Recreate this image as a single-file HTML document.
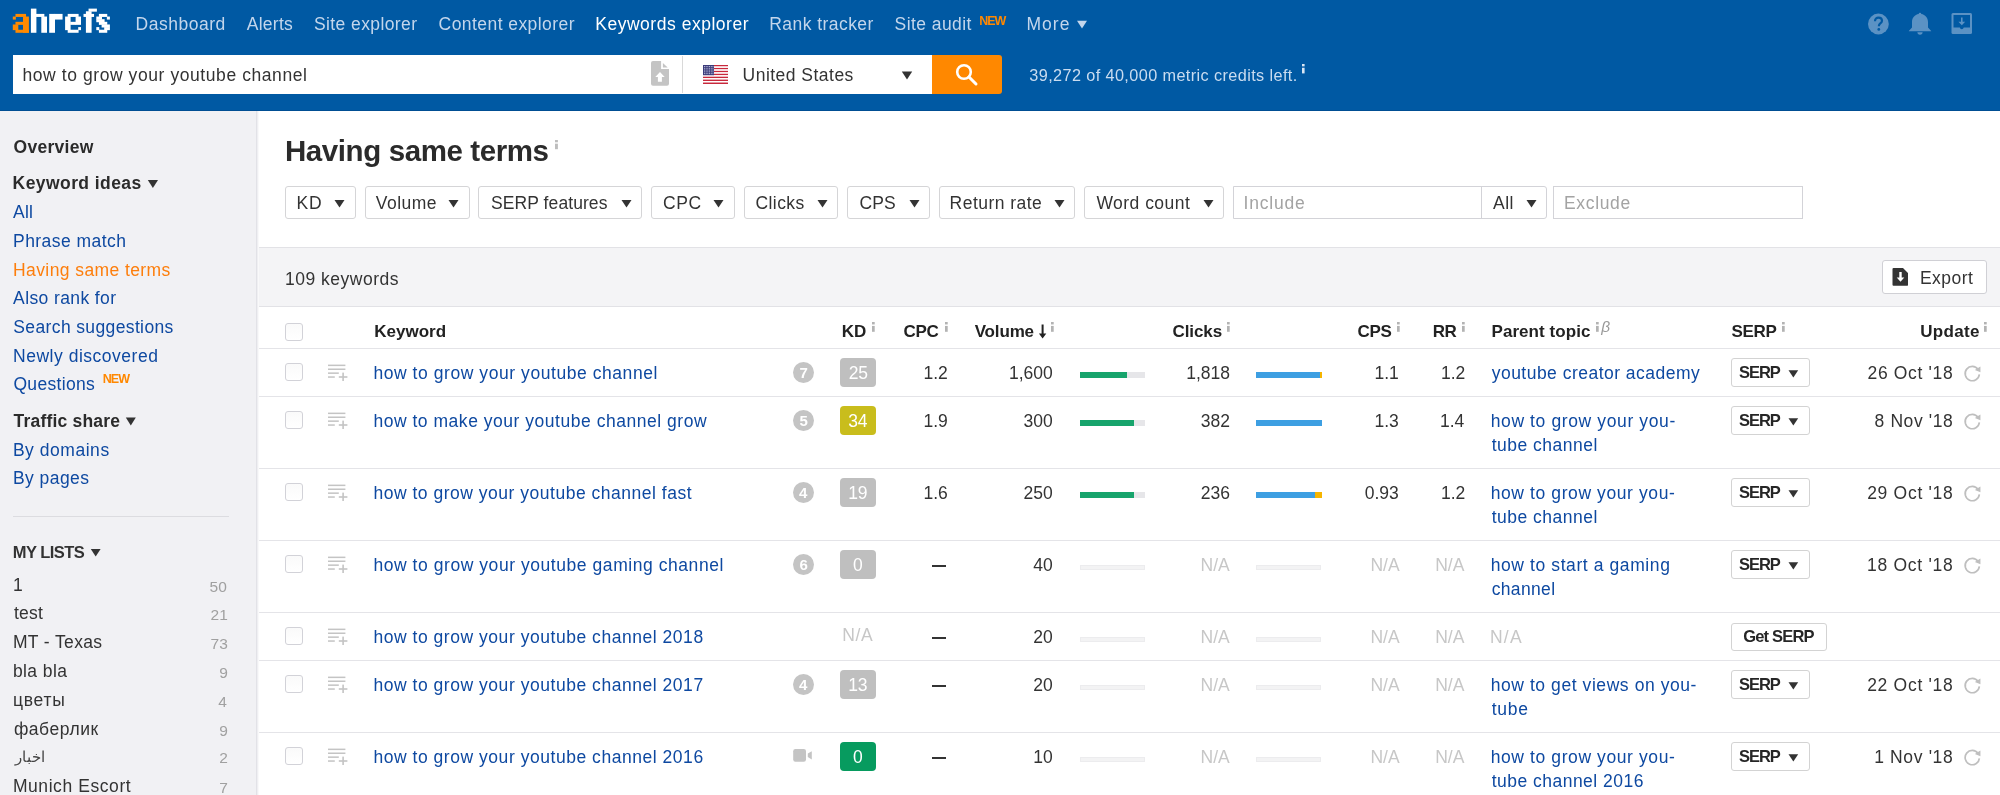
<!DOCTYPE html>
<html><head><meta charset="utf-8"><style>
html,body{margin:0;padding:0;width:2000px;height:795px;overflow:hidden;background:#fff;}
body{position:relative;font-family:"Liberation Sans", sans-serif;}
.t{position:absolute;white-space:nowrap;}
svg{display:block;}
</style></head><body>
<div id="wrap" style="position:absolute;left:0;top:0;width:2000px;height:795px;will-change:transform;">
<div style="position:absolute;left:0;top:0;width:2000px;height:110px;background:#0059a3"></div>
<div style="position:absolute;left:0;top:110px;width:2000px;height:1px;background:#004e93"></div>
<svg style="position:absolute;left:1076px;top:20px" width="12" height="10"><path d="M1 0.8 H11 L6 8.6 Z" fill="#c3d6ec"/></svg>
<div style="position:absolute;left:13px;top:55px;width:919px;height:39px;background:#fff"></div>
<svg style="position:absolute;left:640px;top:55px" width="40" height="40" viewBox="640 55 40 40"><path d="M653 61 H661.1 V69.1 H669 V83.7 A2 2 0 0 1 667 85.7 H653 A2 2 0 0 1 651 83.7 V63 A2 2 0 0 1 653 61 Z" fill="#c4c4c4"/><path d="M662.9 63 V67.6 H667.7 Z" fill="#c4c4c4"/><path d="M660 72.1 L664.7 77.1 H661.9 V81.7 H657.9 V77.1 H655.3 Z" fill="#fff"/></svg>
<div style="position:absolute;left:682px;top:56px;width:1px;height:37px;background:#d9d9d9"></div>
<svg style="position:absolute;left:703px;top:65px" width="25" height="19" viewBox="0 0 25 19"><rect x="0" y="0.000" width="25" height="1.512" fill="#c8283c"/><rect x="0" y="1.462" width="25" height="1.512" fill="#ffffff"/><rect x="0" y="2.923" width="25" height="1.512" fill="#c8283c"/><rect x="0" y="4.385" width="25" height="1.512" fill="#ffffff"/><rect x="0" y="5.846" width="25" height="1.512" fill="#c8283c"/><rect x="0" y="7.308" width="25" height="1.512" fill="#ffffff"/><rect x="0" y="8.769" width="25" height="1.512" fill="#c8283c"/><rect x="0" y="10.231" width="25" height="1.512" fill="#ffffff"/><rect x="0" y="11.692" width="25" height="1.512" fill="#c8283c"/><rect x="0" y="13.154" width="25" height="1.512" fill="#ffffff"/><rect x="0" y="14.615" width="25" height="1.512" fill="#c8283c"/><rect x="0" y="16.077" width="25" height="1.512" fill="#ffffff"/><rect x="0" y="17.538" width="25" height="1.512" fill="#c8283c"/><rect x="0" y="0" width="11" height="10.2" fill="#3b3b7a"/><rect x="1.00" y="1.00" width="0.9" height="0.9" fill="#cfd3ea"/><rect x="2.70" y="1.00" width="0.9" height="0.9" fill="#cfd3ea"/><rect x="4.40" y="1.00" width="0.9" height="0.9" fill="#cfd3ea"/><rect x="6.10" y="1.00" width="0.9" height="0.9" fill="#cfd3ea"/><rect x="7.80" y="1.00" width="0.9" height="0.9" fill="#cfd3ea"/><rect x="9.50" y="1.00" width="0.9" height="0.9" fill="#cfd3ea"/><rect x="1.00" y="2.80" width="0.9" height="0.9" fill="#cfd3ea"/><rect x="2.70" y="2.80" width="0.9" height="0.9" fill="#cfd3ea"/><rect x="4.40" y="2.80" width="0.9" height="0.9" fill="#cfd3ea"/><rect x="6.10" y="2.80" width="0.9" height="0.9" fill="#cfd3ea"/><rect x="7.80" y="2.80" width="0.9" height="0.9" fill="#cfd3ea"/><rect x="9.50" y="2.80" width="0.9" height="0.9" fill="#cfd3ea"/><rect x="1.00" y="4.60" width="0.9" height="0.9" fill="#cfd3ea"/><rect x="2.70" y="4.60" width="0.9" height="0.9" fill="#cfd3ea"/><rect x="4.40" y="4.60" width="0.9" height="0.9" fill="#cfd3ea"/><rect x="6.10" y="4.60" width="0.9" height="0.9" fill="#cfd3ea"/><rect x="7.80" y="4.60" width="0.9" height="0.9" fill="#cfd3ea"/><rect x="9.50" y="4.60" width="0.9" height="0.9" fill="#cfd3ea"/><rect x="1.00" y="6.40" width="0.9" height="0.9" fill="#cfd3ea"/><rect x="2.70" y="6.40" width="0.9" height="0.9" fill="#cfd3ea"/><rect x="4.40" y="6.40" width="0.9" height="0.9" fill="#cfd3ea"/><rect x="6.10" y="6.40" width="0.9" height="0.9" fill="#cfd3ea"/><rect x="7.80" y="6.40" width="0.9" height="0.9" fill="#cfd3ea"/><rect x="9.50" y="6.40" width="0.9" height="0.9" fill="#cfd3ea"/><rect x="1.00" y="8.20" width="0.9" height="0.9" fill="#cfd3ea"/><rect x="2.70" y="8.20" width="0.9" height="0.9" fill="#cfd3ea"/><rect x="4.40" y="8.20" width="0.9" height="0.9" fill="#cfd3ea"/><rect x="6.10" y="8.20" width="0.9" height="0.9" fill="#cfd3ea"/><rect x="7.80" y="8.20" width="0.9" height="0.9" fill="#cfd3ea"/><rect x="9.50" y="8.20" width="0.9" height="0.9" fill="#cfd3ea"/></svg>
<svg style="position:absolute;left:901px;top:71px" width="12" height="9"><path d="M0.8 0.5 H11.2 L6 8.5 Z" fill="#333"/></svg>
<div style="position:absolute;left:932px;top:55px;width:70px;height:39px;background:#ff8800;border-radius:0 3px 3px 0"></div>
<svg style="position:absolute;left:954px;top:62px" width="26" height="26" viewBox="0 0 26 26"><circle cx="10" cy="10" r="6.8" fill="none" stroke="#fff" stroke-width="2.6"/><path d="M15 15 L22 22" stroke="#fff" stroke-width="3" stroke-linecap="round"/></svg>
<svg style="position:absolute;left:1301.80px;top:64.30px" width="3.10" height="9.90"><rect x="0" y="0" width="2.6" height="2.35" fill="#d9e6f4"/><rect x="0" y="3.76" width="2.6" height="5.64" fill="#d9e6f4"/></svg>
<svg style="position:absolute;left:1866px;top:12px" width="24" height="24" viewBox="0 0 24 24"><circle cx="12.4" cy="12" r="10.4" fill="#5b92c4"/><path d="M9 9.3 C9 6.8 10.6 5.6 12.5 5.6 C14.6 5.6 16 6.9 16 8.8 C16 10.6 14.6 11.3 13.6 12.1 C13 12.6 12.9 13.2 12.9 14.3" fill="none" stroke="#0059a3" stroke-width="2.2"/><circle cx="12.8" cy="17.4" r="1.4" fill="#0059a3"/></svg>
<svg style="position:absolute;left:1908px;top:12px" width="24" height="24" viewBox="0 0 24 24"><path d="M12 0.8 A1.3 1.3 0 0 1 13.3 2.1 C17.2 2.8 20 5.8 20 10 V15.6 L23.2 18.9 V19.3 H0.8 V18.9 L4 15.6 V10 C4 5.8 6.8 2.8 10.7 2.1 A1.3 1.3 0 0 1 12 0.8 Z" fill="#5b92c4"/><path d="M9.4 20.3 H14.6 A2.6 2.4 0 0 1 9.4 20.3 Z" fill="#5b92c4"/></svg>
<svg style="position:absolute;left:1950px;top:12px" width="24" height="24" viewBox="0 0 24 24"><rect x="1.5" y="1" width="20.5" height="21" rx="1.5" fill="#5b92c4"/><path d="M3.5 3 H20 V15.6 H13.7 A2 2 0 0 1 9.8 15.6 H3.5 Z" fill="#0059a3"/><path d="M11 5.5 H12.6 V9.8 H15.2 L11.8 13.3 L8.4 9.8 H11 Z" fill="#5b92c4"/></svg>
<svg style="position:absolute;left:0;top:0" width="120" height="40" viewBox="0 0 120 40"><rect x="15.46" y="13.90" width="10.59" height="3.04" fill="#ff8a00"/><rect x="12.80" y="16.54" width="3.06" height="3.04" fill="#ff8a00"/><rect x="23.00" y="16.54" width="5.90" height="16.24" fill="#ff8a00"/><rect x="15.46" y="21.82" width="7.94" height="3.04" fill="#ff8a00"/><rect x="12.80" y="24.46" width="5.50" height="5.68" fill="#ff8a00"/><rect x="15.46" y="29.74" width="13.44" height="3.04" fill="#ff8a00"/><rect x="30.90" y="8.62" width="5.50" height="24.16" fill="#ffffff"/><rect x="36.00" y="13.90" width="8.35" height="3.04" fill="#ffffff"/><rect x="41.30" y="16.54" width="5.70" height="16.24" fill="#ffffff"/><rect x="49.20" y="13.90" width="5.80" height="18.88" fill="#ffffff"/><rect x="54.60" y="13.90" width="7.95" height="5.68" fill="#ffffff"/><rect x="67.70" y="13.90" width="10.90" height="3.04" fill="#ffffff"/><rect x="65.10" y="16.54" width="5.50" height="13.60" fill="#ffffff"/><rect x="75.60" y="16.54" width="5.40" height="8.32" fill="#ffffff"/><rect x="70.20" y="21.82" width="5.80" height="3.04" fill="#ffffff"/><rect x="67.70" y="29.74" width="10.90" height="3.04" fill="#ffffff"/><rect x="78.20" y="27.10" width="2.80" height="3.04" fill="#ffffff"/><rect x="88.55" y="8.62" width="8.35" height="3.04" fill="#ffffff"/><rect x="85.90" y="11.26" width="5.70" height="21.52" fill="#ffffff"/><rect x="83.50" y="13.90" width="10.55" height="3.04" fill="#ffffff"/><rect x="98.90" y="13.90" width="8.35" height="3.04" fill="#ffffff"/><rect x="106.85" y="16.54" width="3.05" height="3.04" fill="#ffffff"/><rect x="96.30" y="16.54" width="5.70" height="3.04" fill="#ffffff"/><rect x="96.30" y="19.18" width="8.30" height="3.04" fill="#ffffff"/><rect x="98.90" y="21.82" width="8.35" height="3.04" fill="#ffffff"/><rect x="101.60" y="24.46" width="8.30" height="3.04" fill="#ffffff"/><rect x="104.20" y="27.10" width="5.70" height="3.04" fill="#ffffff"/><rect x="96.30" y="27.10" width="3.00" height="3.04" fill="#ffffff"/><rect x="98.90" y="29.74" width="8.35" height="3.04" fill="#ffffff"/></svg>
<div style="position:absolute;left:0;top:111px;width:256px;height:684px;background:#f1f1f4"></div>
<div style="position:absolute;left:256px;top:111px;width:1px;height:684px;background:#e2e2e7"></div>
<div style="position:absolute;left:257px;top:111px;width:1px;height:684px;background:#efeff2;z-index:5"></div>
<div style="position:absolute;left:258px;top:111px;width:1px;height:684px;background:#f9f9fa;z-index:5"></div>
<svg style="position:absolute;left:147px;top:180px" width="12" height="9"><path d="M0.8 0 H11 L5.9 8 Z" fill="#333333"/></svg>
<svg style="position:absolute;left:125px;top:417px" width="12" height="9"><path d="M0.8 0.6 H10.8 L5.8 8.6 Z" fill="#333333"/></svg>
<div style="position:absolute;left:13px;top:516px;width:216px;height:1px;background:#dcdce0"></div>
<svg style="position:absolute;left:90px;top:549px" width="12" height="9"><path d="M0.8 0 H10.6 L5.7 7.6 Z" fill="#333333"/></svg>
<div style="position:absolute;left:257px;top:111px;width:1743px;height:136px;background:#fff"></div>
<svg style="position:absolute;left:555.20px;top:140.30px" width="3.40" height="9.70"><rect x="0" y="0" width="2.9" height="2.30" fill="#bdbdbd"/><rect x="0" y="3.68" width="2.9" height="5.52" fill="#bdbdbd"/></svg>
<div style="position:absolute;left:285px;top:186px;width:71px;height:33px;box-sizing:border-box;border:1px solid #d5d5d7;border-radius:3px;background:#fff"></div>
<svg style="position:absolute;left:334.3px;top:200px" width="12" height="9"><path d="M0.5 0 H10.5 L5.5 7.6 Z" fill="#333333"/></svg>
<div style="position:absolute;left:365px;top:186px;width:105px;height:33px;box-sizing:border-box;border:1px solid #d5d5d7;border-radius:3px;background:#fff"></div>
<svg style="position:absolute;left:447.5px;top:200px" width="12" height="9"><path d="M0.5 0 H10.5 L5.5 7.6 Z" fill="#333333"/></svg>
<div style="position:absolute;left:478px;top:186px;width:164px;height:33px;box-sizing:border-box;border:1px solid #d5d5d7;border-radius:3px;background:#fff"></div>
<svg style="position:absolute;left:620.5px;top:200px" width="12" height="9"><path d="M0.5 0 H10.5 L5.5 7.6 Z" fill="#333333"/></svg>
<div style="position:absolute;left:651px;top:186px;width:84px;height:33px;box-sizing:border-box;border:1px solid #d5d5d7;border-radius:3px;background:#fff"></div>
<svg style="position:absolute;left:713.1px;top:200px" width="12" height="9"><path d="M0.5 0 H10.5 L5.5 7.6 Z" fill="#333333"/></svg>
<div style="position:absolute;left:744px;top:186px;width:94px;height:33px;box-sizing:border-box;border:1px solid #d5d5d7;border-radius:3px;background:#fff"></div>
<svg style="position:absolute;left:816.5px;top:200px" width="12" height="9"><path d="M0.5 0 H10.5 L5.5 7.6 Z" fill="#333333"/></svg>
<div style="position:absolute;left:847px;top:186px;width:83px;height:33px;box-sizing:border-box;border:1px solid #d5d5d7;border-radius:3px;background:#fff"></div>
<svg style="position:absolute;left:908.5px;top:200px" width="12" height="9"><path d="M0.5 0 H10.5 L5.5 7.6 Z" fill="#333333"/></svg>
<div style="position:absolute;left:939px;top:186px;width:136px;height:33px;box-sizing:border-box;border:1px solid #d5d5d7;border-radius:3px;background:#fff"></div>
<svg style="position:absolute;left:1053.5px;top:200px" width="12" height="9"><path d="M0.5 0 H10.5 L5.5 7.6 Z" fill="#333333"/></svg>
<div style="position:absolute;left:1084px;top:186px;width:140px;height:33px;box-sizing:border-box;border:1px solid #d5d5d7;border-radius:3px;background:#fff"></div>
<svg style="position:absolute;left:1202.5px;top:200px" width="12" height="9"><path d="M0.5 0 H10.5 L5.5 7.6 Z" fill="#333333"/></svg>
<div style="position:absolute;left:1233px;top:186px;width:314px;height:33px;box-sizing:border-box;border:1px solid #d3d3d8;border-radius:0 3px 3px 0;background:#fff"></div>
<div style="position:absolute;left:1481px;top:186px;width:1px;height:33px;background:#d3d3d8"></div>
<svg style="position:absolute;left:1525.5px;top:200px" width="12" height="9"><path d="M0.5 0 H10.5 L5.5 7.6 Z" fill="#333333"/></svg>
<div style="position:absolute;left:1553px;top:186px;width:250px;height:33px;box-sizing:border-box;border:1px solid #d3d3d8;background:#fff"></div>
<div style="position:absolute;left:257px;top:247px;width:1743px;height:1px;background:#e2e2e6"></div>
<div style="position:absolute;left:257px;top:248px;width:1743px;height:58px;background:#f4f4f6"></div>
<div style="position:absolute;left:257px;top:306px;width:1743px;height:1px;background:#e2e2e6"></div>
<div style="position:absolute;left:1882px;top:260px;width:105px;height:34px;box-sizing:border-box;border:1px solid #d0d0d5;border-radius:3px;background:#fff"></div>
<svg style="position:absolute;left:1892px;top:267px" width="17" height="20" viewBox="0 0 17 20"><path d="M1.5 1 H11 L16 6 V17.5 A1 1 0 0 1 15 18.8 H1.5 A1 1 0 0 1 0.5 17.8 V2 A1 1 0 0 1 1.5 1 Z" fill="#333333"/><path d="M7.3 5 H9.7 V10.5 H12.3 L8.5 14.8 L4.7 10.5 H7.3 Z" fill="#fff"/></svg>
<div style="position:absolute;left:257px;top:307px;width:1743px;height:488px;background:#fff"></div>
<div style="position:absolute;left:285px;top:323px;width:18px;height:18px;box-sizing:border-box;border:1px solid #d2d2d8;border-radius:3px;background:linear-gradient(#fafafa,#fff)"></div>
<svg style="position:absolute;left:871.50px;top:321.70px" width="3.20" height="10.30"><rect x="0" y="0" width="2.7" height="2.45" fill="#b3b3b3"/><rect x="0" y="3.92" width="2.7" height="5.88" fill="#b3b3b3"/></svg>
<svg style="position:absolute;left:944.80px;top:321.70px" width="3.20" height="10.30"><rect x="0" y="0" width="2.7" height="2.45" fill="#b3b3b3"/><rect x="0" y="3.92" width="2.7" height="5.88" fill="#b3b3b3"/></svg>
<svg style="position:absolute;left:1038px;top:324px" width="9" height="15" viewBox="0 0 9 15"><path d="M3.6 0.5 H5.6 V9.5 H8.3 L4.6 14.5 L0.9 9.5 H3.6 Z" fill="#222"/></svg>
<svg style="position:absolute;left:1050.50px;top:321.70px" width="3.20" height="10.30"><rect x="0" y="0" width="2.7" height="2.45" fill="#b3b3b3"/><rect x="0" y="3.92" width="2.7" height="5.88" fill="#b3b3b3"/></svg>
<svg style="position:absolute;left:1227.20px;top:321.70px" width="3.20" height="10.30"><rect x="0" y="0" width="2.7" height="2.45" fill="#b3b3b3"/><rect x="0" y="3.92" width="2.7" height="5.88" fill="#b3b3b3"/></svg>
<svg style="position:absolute;left:1396.60px;top:321.70px" width="3.20" height="10.30"><rect x="0" y="0" width="2.7" height="2.45" fill="#b3b3b3"/><rect x="0" y="3.92" width="2.7" height="5.88" fill="#b3b3b3"/></svg>
<svg style="position:absolute;left:1462.00px;top:321.70px" width="3.20" height="10.30"><rect x="0" y="0" width="2.7" height="2.45" fill="#b3b3b3"/><rect x="0" y="3.92" width="2.7" height="5.88" fill="#b3b3b3"/></svg>
<svg style="position:absolute;left:1595.60px;top:321.70px" width="3.20" height="10.30"><rect x="0" y="0" width="2.7" height="2.45" fill="#b3b3b3"/><rect x="0" y="3.92" width="2.7" height="5.88" fill="#b3b3b3"/></svg>
<svg style="position:absolute;left:1781.50px;top:321.70px" width="3.20" height="10.30"><rect x="0" y="0" width="2.7" height="2.45" fill="#b3b3b3"/><rect x="0" y="3.92" width="2.7" height="5.88" fill="#b3b3b3"/></svg>
<svg style="position:absolute;left:1984.00px;top:321.70px" width="3.20" height="10.30"><rect x="0" y="0" width="2.7" height="2.45" fill="#b3b3b3"/><rect x="0" y="3.92" width="2.7" height="5.88" fill="#b3b3b3"/></svg>
<div style="position:absolute;left:257px;top:348px;width:1743px;height:1px;background:#e4e4e8"></div>
<div style="position:absolute;left:285px;top:363px;width:18px;height:18px;box-sizing:border-box;border:1px solid #d2d2d8;border-radius:3px;background:linear-gradient(#fafafa,#fff)"></div>
<svg style="position:absolute;left:327px;top:364px" width="21" height="18" viewBox="0 0 21 18"><g fill="#c4c4c4"><rect x="1" y="0.6" width="17.4" height="1.5"/><rect x="1" y="4.5" width="17.4" height="1.5"/><rect x="1" y="8.4" width="10.8" height="1.5"/><rect x="1" y="12.3" width="6.8" height="1.5"/><rect x="15.3" y="8.6" width="1.6" height="8.4"/><rect x="11.8" y="12.2" width="8.6" height="1.6"/></g></svg>
<div style="position:absolute;left:793px;top:362px;width:21px;height:21px;border-radius:50%;background:#c4c4c4"></div>
<div style="position:absolute;left:840px;top:358px;width:35.6px;height:29px;border-radius:4px;background:#bfbfbf"></div>
<div style="position:absolute;left:1079.6px;top:372.3px;width:65.4px;height:5.4px;background:#e6e6e9"></div>
<div style="position:absolute;left:1079.6px;top:372.3px;width:47.4px;height:5.4px;background:#17a46c"></div>
<div style="position:absolute;left:1256px;top:372.3px;width:64.2px;height:5.4px;background:#3d9fe2"></div>
<div style="position:absolute;left:1320.2px;top:372.3px;width:1.4px;height:5.4px;background:#f6b500"></div>
<div style="position:absolute;left:1731px;top:358px;width:79px;height:29px;box-sizing:border-box;border:1px solid #d3d3d3;border-radius:3px;background:#fff"></div>
<svg style="position:absolute;left:1788px;top:369.5px" width="11" height="9"><path d="M0.5 0.2 H10.2 L5.35 7.6 Z" fill="#333333"/></svg>
<svg style="position:absolute;left:1963.3px;top:364.6px" width="19" height="18" viewBox="0 0 18 17"><path d="M14.3 4.2 A6.75 6.75 0 1 0 15.5 8.8" fill="none" stroke="#bfbfbf" stroke-width="1.6"/><path d="M11.2 4.7 L16.5 1.4 L16.5 6.9 Z" fill="#bfbfbf"/></svg>
<div style="position:absolute;left:257px;top:396px;width:1743px;height:1px;background:#e4e4e8"></div>
<div style="position:absolute;left:285px;top:411px;width:18px;height:18px;box-sizing:border-box;border:1px solid #d2d2d8;border-radius:3px;background:linear-gradient(#fafafa,#fff)"></div>
<svg style="position:absolute;left:327px;top:412px" width="21" height="18" viewBox="0 0 21 18"><g fill="#c4c4c4"><rect x="1" y="0.6" width="17.4" height="1.5"/><rect x="1" y="4.5" width="17.4" height="1.5"/><rect x="1" y="8.4" width="10.8" height="1.5"/><rect x="1" y="12.3" width="6.8" height="1.5"/><rect x="15.3" y="8.6" width="1.6" height="8.4"/><rect x="11.8" y="12.2" width="8.6" height="1.6"/></g></svg>
<div style="position:absolute;left:793px;top:410px;width:21px;height:21px;border-radius:50%;background:#c4c4c4"></div>
<div style="position:absolute;left:840px;top:406px;width:35.6px;height:29px;border-radius:4px;background:#c9bd1c"></div>
<div style="position:absolute;left:1079.6px;top:420.3px;width:65.4px;height:5.4px;background:#e6e6e9"></div>
<div style="position:absolute;left:1079.6px;top:420.3px;width:54.6px;height:5.4px;background:#17a46c"></div>
<div style="position:absolute;left:1256px;top:420.3px;width:65.6px;height:5.4px;background:#3d9fe2"></div>
<div style="position:absolute;left:1731px;top:406px;width:79px;height:29px;box-sizing:border-box;border:1px solid #d3d3d3;border-radius:3px;background:#fff"></div>
<svg style="position:absolute;left:1788px;top:417.5px" width="11" height="9"><path d="M0.5 0.2 H10.2 L5.35 7.6 Z" fill="#333333"/></svg>
<svg style="position:absolute;left:1963.3px;top:412.6px" width="19" height="18" viewBox="0 0 18 17"><path d="M14.3 4.2 A6.75 6.75 0 1 0 15.5 8.8" fill="none" stroke="#bfbfbf" stroke-width="1.6"/><path d="M11.2 4.7 L16.5 1.4 L16.5 6.9 Z" fill="#bfbfbf"/></svg>
<div style="position:absolute;left:257px;top:468px;width:1743px;height:1px;background:#e4e4e8"></div>
<div style="position:absolute;left:285px;top:483px;width:18px;height:18px;box-sizing:border-box;border:1px solid #d2d2d8;border-radius:3px;background:linear-gradient(#fafafa,#fff)"></div>
<svg style="position:absolute;left:327px;top:484px" width="21" height="18" viewBox="0 0 21 18"><g fill="#c4c4c4"><rect x="1" y="0.6" width="17.4" height="1.5"/><rect x="1" y="4.5" width="17.4" height="1.5"/><rect x="1" y="8.4" width="10.8" height="1.5"/><rect x="1" y="12.3" width="6.8" height="1.5"/><rect x="15.3" y="8.6" width="1.6" height="8.4"/><rect x="11.8" y="12.2" width="8.6" height="1.6"/></g></svg>
<div style="position:absolute;left:793px;top:482px;width:21px;height:21px;border-radius:50%;background:#c4c4c4"></div>
<div style="position:absolute;left:840px;top:478px;width:35.6px;height:29px;border-radius:4px;background:#bfbfbf"></div>
<div style="position:absolute;left:1079.6px;top:492.3px;width:65.4px;height:5.4px;background:#e6e6e9"></div>
<div style="position:absolute;left:1079.6px;top:492.3px;width:54.9px;height:5.4px;background:#17a46c"></div>
<div style="position:absolute;left:1256px;top:492.3px;width:58.8px;height:5.4px;background:#3d9fe2"></div>
<div style="position:absolute;left:1314.8px;top:492.3px;width:6.8px;height:5.4px;background:#f6b500"></div>
<div style="position:absolute;left:1731px;top:478px;width:79px;height:29px;box-sizing:border-box;border:1px solid #d3d3d3;border-radius:3px;background:#fff"></div>
<svg style="position:absolute;left:1788px;top:489.5px" width="11" height="9"><path d="M0.5 0.2 H10.2 L5.35 7.6 Z" fill="#333333"/></svg>
<svg style="position:absolute;left:1963.3px;top:484.6px" width="19" height="18" viewBox="0 0 18 17"><path d="M14.3 4.2 A6.75 6.75 0 1 0 15.5 8.8" fill="none" stroke="#bfbfbf" stroke-width="1.6"/><path d="M11.2 4.7 L16.5 1.4 L16.5 6.9 Z" fill="#bfbfbf"/></svg>
<div style="position:absolute;left:257px;top:540px;width:1743px;height:1px;background:#e4e4e8"></div>
<div style="position:absolute;left:285px;top:555px;width:18px;height:18px;box-sizing:border-box;border:1px solid #d2d2d8;border-radius:3px;background:linear-gradient(#fafafa,#fff)"></div>
<svg style="position:absolute;left:327px;top:556px" width="21" height="18" viewBox="0 0 21 18"><g fill="#c4c4c4"><rect x="1" y="0.6" width="17.4" height="1.5"/><rect x="1" y="4.5" width="17.4" height="1.5"/><rect x="1" y="8.4" width="10.8" height="1.5"/><rect x="1" y="12.3" width="6.8" height="1.5"/><rect x="15.3" y="8.6" width="1.6" height="8.4"/><rect x="11.8" y="12.2" width="8.6" height="1.6"/></g></svg>
<div style="position:absolute;left:793px;top:554px;width:21px;height:21px;border-radius:50%;background:#c4c4c4"></div>
<div style="position:absolute;left:840px;top:550px;width:35.6px;height:29px;border-radius:4px;background:#bfbfbf"></div>
<div style="position:absolute;left:931.5px;top:565px;width:14px;height:1.6px;background:#333"></div>
<div style="position:absolute;left:1079.7px;top:564.5px;width:65px;height:5px;box-sizing:border-box;border:1px solid #ececee;background:#f3f3f4"></div>
<div style="position:absolute;left:1256.2px;top:564.5px;width:65px;height:5px;box-sizing:border-box;border:1px solid #ececee;background:#f3f3f4"></div>
<div style="position:absolute;left:1731px;top:550px;width:79px;height:29px;box-sizing:border-box;border:1px solid #d3d3d3;border-radius:3px;background:#fff"></div>
<svg style="position:absolute;left:1788px;top:561.5px" width="11" height="9"><path d="M0.5 0.2 H10.2 L5.35 7.6 Z" fill="#333333"/></svg>
<svg style="position:absolute;left:1963.3px;top:556.6px" width="19" height="18" viewBox="0 0 18 17"><path d="M14.3 4.2 A6.75 6.75 0 1 0 15.5 8.8" fill="none" stroke="#bfbfbf" stroke-width="1.6"/><path d="M11.2 4.7 L16.5 1.4 L16.5 6.9 Z" fill="#bfbfbf"/></svg>
<div style="position:absolute;left:257px;top:612px;width:1743px;height:1px;background:#e4e4e8"></div>
<div style="position:absolute;left:285px;top:627px;width:18px;height:18px;box-sizing:border-box;border:1px solid #d2d2d8;border-radius:3px;background:linear-gradient(#fafafa,#fff)"></div>
<svg style="position:absolute;left:327px;top:628px" width="21" height="18" viewBox="0 0 21 18"><g fill="#c4c4c4"><rect x="1" y="0.6" width="17.4" height="1.5"/><rect x="1" y="4.5" width="17.4" height="1.5"/><rect x="1" y="8.4" width="10.8" height="1.5"/><rect x="1" y="12.3" width="6.8" height="1.5"/><rect x="15.3" y="8.6" width="1.6" height="8.4"/><rect x="11.8" y="12.2" width="8.6" height="1.6"/></g></svg>
<div style="position:absolute;left:931.5px;top:637px;width:14px;height:1.6px;background:#333"></div>
<div style="position:absolute;left:1079.7px;top:636.5px;width:65px;height:5px;box-sizing:border-box;border:1px solid #ececee;background:#f3f3f4"></div>
<div style="position:absolute;left:1256.2px;top:636.5px;width:65px;height:5px;box-sizing:border-box;border:1px solid #ececee;background:#f3f3f4"></div>
<div style="position:absolute;left:1731px;top:623px;width:96px;height:28px;box-sizing:border-box;border:1px solid #d3d3d3;border-radius:3px;background:#fff"></div>
<div style="position:absolute;left:257px;top:660px;width:1743px;height:1px;background:#e4e4e8"></div>
<div style="position:absolute;left:285px;top:675px;width:18px;height:18px;box-sizing:border-box;border:1px solid #d2d2d8;border-radius:3px;background:linear-gradient(#fafafa,#fff)"></div>
<svg style="position:absolute;left:327px;top:676px" width="21" height="18" viewBox="0 0 21 18"><g fill="#c4c4c4"><rect x="1" y="0.6" width="17.4" height="1.5"/><rect x="1" y="4.5" width="17.4" height="1.5"/><rect x="1" y="8.4" width="10.8" height="1.5"/><rect x="1" y="12.3" width="6.8" height="1.5"/><rect x="15.3" y="8.6" width="1.6" height="8.4"/><rect x="11.8" y="12.2" width="8.6" height="1.6"/></g></svg>
<div style="position:absolute;left:793px;top:674px;width:21px;height:21px;border-radius:50%;background:#c4c4c4"></div>
<div style="position:absolute;left:840px;top:670px;width:35.6px;height:29px;border-radius:4px;background:#bfbfbf"></div>
<div style="position:absolute;left:931.5px;top:685px;width:14px;height:1.6px;background:#333"></div>
<div style="position:absolute;left:1079.7px;top:684.5px;width:65px;height:5px;box-sizing:border-box;border:1px solid #ececee;background:#f3f3f4"></div>
<div style="position:absolute;left:1256.2px;top:684.5px;width:65px;height:5px;box-sizing:border-box;border:1px solid #ececee;background:#f3f3f4"></div>
<div style="position:absolute;left:1731px;top:670px;width:79px;height:29px;box-sizing:border-box;border:1px solid #d3d3d3;border-radius:3px;background:#fff"></div>
<svg style="position:absolute;left:1788px;top:681.5px" width="11" height="9"><path d="M0.5 0.2 H10.2 L5.35 7.6 Z" fill="#333333"/></svg>
<svg style="position:absolute;left:1963.3px;top:676.6px" width="19" height="18" viewBox="0 0 18 17"><path d="M14.3 4.2 A6.75 6.75 0 1 0 15.5 8.8" fill="none" stroke="#bfbfbf" stroke-width="1.6"/><path d="M11.2 4.7 L16.5 1.4 L16.5 6.9 Z" fill="#bfbfbf"/></svg>
<div style="position:absolute;left:257px;top:732px;width:1743px;height:1px;background:#e4e4e8"></div>
<div style="position:absolute;left:285px;top:747px;width:18px;height:18px;box-sizing:border-box;border:1px solid #d2d2d8;border-radius:3px;background:linear-gradient(#fafafa,#fff)"></div>
<svg style="position:absolute;left:327px;top:748px" width="21" height="18" viewBox="0 0 21 18"><g fill="#c4c4c4"><rect x="1" y="0.6" width="17.4" height="1.5"/><rect x="1" y="4.5" width="17.4" height="1.5"/><rect x="1" y="8.4" width="10.8" height="1.5"/><rect x="1" y="12.3" width="6.8" height="1.5"/><rect x="15.3" y="8.6" width="1.6" height="8.4"/><rect x="11.8" y="12.2" width="8.6" height="1.6"/></g></svg>
<svg style="position:absolute;left:793px;top:749px" width="20" height="14" viewBox="0 0 20 14"><rect x="0.2" y="0" width="12.8" height="12.8" rx="2.2" fill="#c4c4c4"/><path d="M14.8 4.6 L18.8 2.2 V10.4 L14.8 8 Z" fill="#c4c4c4"/></svg>
<div style="position:absolute;left:840px;top:742px;width:35.6px;height:29px;border-radius:4px;background:#079b5f"></div>
<div style="position:absolute;left:931.5px;top:757px;width:14px;height:1.6px;background:#333"></div>
<div style="position:absolute;left:1079.7px;top:756.5px;width:65px;height:5px;box-sizing:border-box;border:1px solid #ececee;background:#f3f3f4"></div>
<div style="position:absolute;left:1256.2px;top:756.5px;width:65px;height:5px;box-sizing:border-box;border:1px solid #ececee;background:#f3f3f4"></div>
<div style="position:absolute;left:1731px;top:742px;width:79px;height:29px;box-sizing:border-box;border:1px solid #d3d3d3;border-radius:3px;background:#fff"></div>
<svg style="position:absolute;left:1788px;top:753.5px" width="11" height="9"><path d="M0.5 0.2 H10.2 L5.35 7.6 Z" fill="#333333"/></svg>
<svg style="position:absolute;left:1963.3px;top:748.6px" width="19" height="18" viewBox="0 0 18 17"><path d="M14.3 4.2 A6.75 6.75 0 1 0 15.5 8.8" fill="none" stroke="#bfbfbf" stroke-width="1.6"/><path d="M11.2 4.7 L16.5 1.4 L16.5 6.9 Z" fill="#bfbfbf"/></svg>
<div style="position:absolute;left:257px;top:800px;width:1743px;height:1px;background:#e4e4e8"></div>
<div class="t" style="left:135.50px;top:14px;font-size:17.5px;line-height:20px;color:#c3d6ec;letter-spacing:0.515px;">Dashboard</div>
<div class="t" style="left:246.80px;top:14px;font-size:17.5px;line-height:20px;color:#c3d6ec;letter-spacing:0.243px;">Alerts</div>
<div class="t" style="left:314.00px;top:14px;font-size:17.5px;line-height:20px;color:#c3d6ec;letter-spacing:0.399px;">Site explorer</div>
<div class="t" style="left:438.60px;top:14px;font-size:17.5px;line-height:20px;color:#c3d6ec;letter-spacing:0.437px;">Content explorer</div>
<div class="t" style="left:595.20px;top:14px;font-size:17.5px;line-height:20px;color:#ffffff;letter-spacing:0.528px;">Keywords explorer</div>
<div class="t" style="left:769.30px;top:14px;font-size:17.5px;line-height:20px;color:#c3d6ec;letter-spacing:0.439px;">Rank tracker</div>
<div class="t" style="left:894.60px;top:14px;font-size:17.5px;line-height:20px;color:#c3d6ec;letter-spacing:0.422px;">Site audit</div>
<div class="t" style="left:1026.40px;top:14px;font-size:17.5px;line-height:20px;color:#c3d6ec;letter-spacing:1.054px;">More</div>
<div class="t" style="left:979.20px;top:14px;font-size:12.5px;line-height:14px;color:#ff8800;font-weight:bold;letter-spacing:-1.000px;">NEW</div>
<div class="t" style="left:22.50px;top:65px;font-size:17.5px;line-height:20px;color:#333;letter-spacing:0.575px;">how to grow your youtube channel</div>
<div class="t" style="left:742.60px;top:65px;font-size:17.5px;line-height:20px;color:#333;letter-spacing:0.474px;">United States</div>
<div class="t" style="left:1029.30px;top:66px;font-size:16.25px;line-height:18px;color:#c9dcf0;letter-spacing:0.392px;">39,272 of 40,000 metric credits left.</div>
<div class="t" style="left:13.60px;top:137px;font-size:17.5px;line-height:20px;color:#2b2b2b;font-weight:bold;letter-spacing:0.269px;">Overview</div>
<div class="t" style="left:12.60px;top:173px;font-size:17.5px;line-height:20px;color:#2b2b2b;font-weight:bold;letter-spacing:0.426px;">Keyword ideas</div>
<div class="t" style="left:13.10px;top:202px;font-size:17.5px;line-height:20px;color:#0e49a1;letter-spacing:0.170px;">All</div>
<div class="t" style="left:13.00px;top:231px;font-size:17.5px;line-height:20px;color:#0e49a1;letter-spacing:0.461px;">Phrase match</div>
<div class="t" style="left:13.00px;top:260px;font-size:17.5px;line-height:20px;color:#fd7e0c;letter-spacing:0.413px;">Having same terms</div>
<div class="t" style="left:13.10px;top:288px;font-size:17.5px;line-height:20px;color:#0e49a1;letter-spacing:0.391px;">Also rank for</div>
<div class="t" style="left:13.30px;top:317px;font-size:17.5px;line-height:20px;color:#0e49a1;letter-spacing:0.373px;">Search suggestions</div>
<div class="t" style="left:13.00px;top:346px;font-size:17.5px;line-height:20px;color:#0e49a1;letter-spacing:0.520px;">Newly discovered</div>
<div class="t" style="left:13.40px;top:374px;font-size:17.5px;line-height:20px;color:#0e49a1;letter-spacing:0.320px;">Questions</div>
<div class="t" style="left:102.80px;top:372px;font-size:12.5px;line-height:14px;color:#ff8800;font-weight:bold;letter-spacing:-1.000px;">NEW</div>
<div class="t" style="left:13.60px;top:411px;font-size:17.5px;line-height:20px;color:#2b2b2b;font-weight:bold;letter-spacing:0.196px;">Traffic share</div>
<div class="t" style="left:12.90px;top:440px;font-size:17.5px;line-height:20px;color:#0e49a1;letter-spacing:0.535px;">By domains</div>
<div class="t" style="left:12.90px;top:468px;font-size:17.5px;line-height:20px;color:#0e49a1;letter-spacing:0.455px;">By pages</div>
<div class="t" style="left:12.80px;top:543px;font-size:16.5px;line-height:18px;color:#333333;font-weight:bold;letter-spacing:-0.555px;">MY LISTS</div>
<div class="t" style="left:12.90px;top:575px;font-size:17.5px;line-height:20px;color:#333333;">1</div>
<div class="t" style="left:209.58px;top:578px;font-size:15.5px;line-height:17px;color:#a0a0a0;">50</div>
<div class="t" style="left:13.90px;top:603px;font-size:17.5px;line-height:20px;color:#333333;letter-spacing:0.252px;">test</div>
<div class="t" style="left:210.58px;top:606px;font-size:15.5px;line-height:17px;color:#a0a0a0;">21</div>
<div class="t" style="left:12.90px;top:632px;font-size:17.5px;line-height:20px;color:#333333;letter-spacing:0.368px;">MT - Texas</div>
<div class="t" style="left:210.58px;top:635px;font-size:15.5px;line-height:17px;color:#a0a0a0;">73</div>
<div class="t" style="left:12.90px;top:661px;font-size:17.5px;line-height:20px;color:#333333;letter-spacing:0.427px;">bla bla</div>
<div class="t" style="left:219.20px;top:664px;font-size:15.5px;line-height:17px;color:#a0a0a0;">9</div>
<div class="t" style="left:12.90px;top:690px;font-size:17.5px;line-height:20px;color:#333333;letter-spacing:0.752px;">цветы</div>
<div class="t" style="left:218.20px;top:693px;font-size:15.5px;line-height:17px;color:#a0a0a0;">4</div>
<div class="t" style="left:13.90px;top:719px;font-size:17.5px;line-height:20px;color:#333333;letter-spacing:0.541px;">фаберлик</div>
<div class="t" style="left:219.20px;top:722px;font-size:15.5px;line-height:17px;color:#a0a0a0;">9</div>
<div class="t" style="left:14.50px;top:749px;font-size:14.5px;line-height:16px;color:#444;">اخبار</div>
<div class="t" style="left:219.20px;top:749px;font-size:15.5px;line-height:17px;color:#a0a0a0;">2</div>
<div class="t" style="left:12.90px;top:776px;font-size:17.5px;line-height:20px;color:#333333;letter-spacing:0.574px;">Munich Escort</div>
<div class="t" style="left:219.20px;top:779px;font-size:15.5px;line-height:17px;color:#a0a0a0;">7</div>
<div class="t" style="left:284.90px;top:134px;font-size:29.5px;line-height:33px;color:#2b2b2b;font-weight:bold;letter-spacing:-0.402px;">Having same terms</div>
<div class="t" style="left:296.40px;top:193px;font-size:17.5px;line-height:20px;color:#333333;letter-spacing:0.928px;">KD</div>
<div class="t" style="left:375.80px;top:193px;font-size:17.5px;line-height:20px;color:#333333;letter-spacing:0.462px;">Volume</div>
<div class="t" style="left:491.00px;top:193px;font-size:17.5px;line-height:20px;color:#333333;letter-spacing:0.083px;">SERP features</div>
<div class="t" style="left:663.00px;top:193px;font-size:17.5px;line-height:20px;color:#333333;letter-spacing:0.545px;">CPC</div>
<div class="t" style="left:755.60px;top:193px;font-size:17.5px;line-height:20px;color:#333333;letter-spacing:0.377px;">Clicks</div>
<div class="t" style="left:859.40px;top:193px;font-size:17.5px;line-height:20px;color:#333333;letter-spacing:0.145px;">CPS</div>
<div class="t" style="left:949.60px;top:193px;font-size:17.5px;line-height:20px;color:#333333;letter-spacing:0.459px;">Return rate</div>
<div class="t" style="left:1096.40px;top:193px;font-size:17.5px;line-height:20px;color:#333333;letter-spacing:0.477px;">Word count</div>
<div class="t" style="left:1243.60px;top:193px;font-size:17.5px;line-height:20px;color:#a3a3a3;letter-spacing:0.784px;">Include</div>
<div class="t" style="left:1493.00px;top:193px;font-size:17.5px;line-height:20px;color:#333333;letter-spacing:0.470px;">All</div>
<div class="t" style="left:1564.00px;top:193px;font-size:17.5px;line-height:20px;color:#a3a3a3;letter-spacing:0.662px;">Exclude</div>
<div class="t" style="left:284.90px;top:269px;font-size:17.5px;line-height:20px;color:#333333;letter-spacing:0.511px;">109 keywords</div>
<div class="t" style="left:1919.90px;top:268px;font-size:17.5px;line-height:20px;color:#333333;letter-spacing:0.497px;">Export</div>
<div class="t" style="left:374.30px;top:322px;font-size:17px;line-height:19px;color:#222;font-weight:bold;">Keyword</div>
<div class="t" style="left:841.80px;top:322px;font-size:17px;line-height:19px;color:#222;font-weight:bold;letter-spacing:-0.077px;">KD</div>
<div class="t" style="left:903.40px;top:322px;font-size:17px;line-height:19px;color:#222;font-weight:bold;letter-spacing:-0.258px;">CPC</div>
<div class="t" style="left:974.70px;top:322px;font-size:17px;line-height:19px;color:#222;font-weight:bold;letter-spacing:-0.157px;">Volume</div>
<div class="t" style="left:1172.50px;top:322px;font-size:17px;line-height:19px;color:#222;font-weight:bold;letter-spacing:-0.086px;">Clicks</div>
<div class="t" style="left:1357.50px;top:322px;font-size:17px;line-height:19px;color:#222;font-weight:bold;letter-spacing:-0.308px;">CPS</div>
<div class="t" style="left:1432.70px;top:322px;font-size:17px;line-height:19px;color:#222;font-weight:bold;letter-spacing:-0.377px;">RR</div>
<div class="t" style="left:1491.50px;top:322px;font-size:17px;line-height:19px;color:#222;font-weight:bold;letter-spacing:0.065px;">Parent topic</div>
<div class="t" style="left:1601.30px;top:318px;font-size:15.5px;line-height:17px;color:#999999;font-style:italic;">β</div>
<div class="t" style="left:1731.50px;top:322px;font-size:17px;line-height:19px;color:#222;font-weight:bold;letter-spacing:-0.318px;">SERP</div>
<div class="t" style="left:1920.20px;top:322px;font-size:17px;line-height:19px;color:#222;font-weight:bold;letter-spacing:0.328px;">Update</div>
<div class="t" style="left:373.40px;top:363px;font-size:17.5px;line-height:20px;color:#0e49a1;letter-spacing:0.562px;">how to grow your youtube channel</div>
<div class="t" style="left:799.60px;top:364px;font-size:15px;line-height:17px;color:#ffffff;font-weight:bold;">7</div>
<div class="t" style="left:848.63px;top:363px;font-size:17.5px;line-height:20px;color:#ffffff;">25</div>
<div class="t" style="left:923.41px;top:363px;font-size:17.5px;line-height:20px;color:#333333;">1.2</div>
<div class="t" style="left:1008.94px;top:363px;font-size:17.5px;line-height:20px;color:#333333;">1,600</div>
<div class="t" style="left:1186.24px;top:363px;font-size:17.5px;line-height:20px;color:#333333;">1,818</div>
<div class="t" style="left:1374.41px;top:363px;font-size:17.5px;line-height:20px;color:#333333;">1.1</div>
<div class="t" style="left:1440.91px;top:363px;font-size:17.5px;line-height:20px;color:#333333;">1.2</div>
<div class="t" style="left:1491.70px;top:363px;font-size:17.5px;line-height:20px;color:#0e49a1;letter-spacing:0.481px;">youtube creator academy</div>
<div class="t" style="left:1738.90px;top:363px;font-size:16.5px;line-height:18px;color:#262626;font-weight:bold;letter-spacing:-1.000px;">SERP</div>
<div class="t" style="left:1867.50px;top:363px;font-size:17.5px;line-height:20px;color:#333333;letter-spacing:0.668px;">26 Oct '18</div>
<div class="t" style="left:373.40px;top:411px;font-size:17.5px;line-height:20px;color:#0e49a1;letter-spacing:0.526px;">how to make your youtube channel grow</div>
<div class="t" style="left:799.60px;top:412px;font-size:15px;line-height:17px;color:#ffffff;font-weight:bold;">5</div>
<div class="t" style="left:848.13px;top:411px;font-size:17.5px;line-height:20px;color:#ffffff;">34</div>
<div class="t" style="left:923.41px;top:411px;font-size:17.5px;line-height:20px;color:#333333;">1.9</div>
<div class="t" style="left:1023.53px;top:411px;font-size:17.5px;line-height:20px;color:#333333;">300</div>
<div class="t" style="left:1200.83px;top:411px;font-size:17.5px;line-height:20px;color:#333333;">382</div>
<div class="t" style="left:1374.41px;top:411px;font-size:17.5px;line-height:20px;color:#333333;">1.3</div>
<div class="t" style="left:1439.91px;top:411px;font-size:17.5px;line-height:20px;color:#333333;">1.4</div>
<div class="t" style="left:1490.70px;top:411px;font-size:17.5px;line-height:20px;color:#0e49a1;letter-spacing:0.618px;">how to grow your you-</div>
<div class="t" style="left:1491.70px;top:435px;font-size:17.5px;line-height:20px;color:#0e49a1;letter-spacing:0.488px;">tube channel</div>
<div class="t" style="left:1738.90px;top:411px;font-size:16.5px;line-height:18px;color:#262626;font-weight:bold;letter-spacing:-1.000px;">SERP</div>
<div class="t" style="left:1874.60px;top:411px;font-size:17.5px;line-height:20px;color:#333333;letter-spacing:0.594px;">8 Nov '18</div>
<div class="t" style="left:373.40px;top:483px;font-size:17.5px;line-height:20px;color:#0e49a1;letter-spacing:0.515px;">how to grow your youtube channel fast</div>
<div class="t" style="left:799.10px;top:484px;font-size:15px;line-height:17px;color:#ffffff;font-weight:bold;">4</div>
<div class="t" style="left:848.13px;top:483px;font-size:17.5px;line-height:20px;color:#ffffff;">19</div>
<div class="t" style="left:923.41px;top:483px;font-size:17.5px;line-height:20px;color:#333333;">1.6</div>
<div class="t" style="left:1023.53px;top:483px;font-size:17.5px;line-height:20px;color:#333333;">250</div>
<div class="t" style="left:1200.83px;top:483px;font-size:17.5px;line-height:20px;color:#333333;">236</div>
<div class="t" style="left:1364.67px;top:483px;font-size:17.5px;line-height:20px;color:#333333;">0.93</div>
<div class="t" style="left:1440.91px;top:483px;font-size:17.5px;line-height:20px;color:#333333;">1.2</div>
<div class="t" style="left:1490.70px;top:483px;font-size:17.5px;line-height:20px;color:#0e49a1;letter-spacing:0.598px;">how to grow your you-</div>
<div class="t" style="left:1491.70px;top:507px;font-size:17.5px;line-height:20px;color:#0e49a1;letter-spacing:0.488px;">tube channel</div>
<div class="t" style="left:1738.90px;top:483px;font-size:16.5px;line-height:18px;color:#262626;font-weight:bold;letter-spacing:-1.000px;">SERP</div>
<div class="t" style="left:1867.20px;top:483px;font-size:17.5px;line-height:20px;color:#333333;letter-spacing:0.701px;">29 Oct '18</div>
<div class="t" style="left:373.40px;top:555px;font-size:17.5px;line-height:20px;color:#0e49a1;letter-spacing:0.557px;">how to grow your youtube gaming channel</div>
<div class="t" style="left:799.60px;top:556px;font-size:15px;line-height:17px;color:#ffffff;font-weight:bold;">6</div>
<div class="t" style="left:853.00px;top:555px;font-size:17.5px;line-height:20px;color:#ffffff;">0</div>
<div class="t" style="left:1033.27px;top:555px;font-size:17.5px;line-height:20px;color:#333333;">40</div>
<div class="t" style="left:1200.50px;top:555px;font-size:17.5px;line-height:20px;color:#c7c7c7;">N/A</div>
<div class="t" style="left:1370.40px;top:555px;font-size:17.5px;line-height:20px;color:#c7c7c7;">N/A</div>
<div class="t" style="left:1435.20px;top:555px;font-size:17.5px;line-height:20px;color:#c7c7c7;">N/A</div>
<div class="t" style="left:1490.70px;top:555px;font-size:17.5px;line-height:20px;color:#0e49a1;letter-spacing:0.596px;">how to start a gaming</div>
<div class="t" style="left:1491.70px;top:579px;font-size:17.5px;line-height:20px;color:#0e49a1;letter-spacing:0.348px;">channel</div>
<div class="t" style="left:1738.90px;top:555px;font-size:16.5px;line-height:18px;color:#262626;font-weight:bold;letter-spacing:-1.000px;">SERP</div>
<div class="t" style="left:1867.00px;top:555px;font-size:17.5px;line-height:20px;color:#333333;letter-spacing:0.724px;">18 Oct '18</div>
<div class="t" style="left:373.40px;top:627px;font-size:17.5px;line-height:20px;color:#0e49a1;letter-spacing:0.538px;">how to grow your youtube channel 2018</div>
<div class="t" style="left:842.30px;top:625px;font-size:17.5px;line-height:20px;color:#c7c7c7;letter-spacing:0.650px;">N/A</div>
<div class="t" style="left:1033.27px;top:627px;font-size:17.5px;line-height:20px;color:#333333;">20</div>
<div class="t" style="left:1200.50px;top:627px;font-size:17.5px;line-height:20px;color:#c7c7c7;">N/A</div>
<div class="t" style="left:1370.40px;top:627px;font-size:17.5px;line-height:20px;color:#c7c7c7;">N/A</div>
<div class="t" style="left:1435.20px;top:627px;font-size:17.5px;line-height:20px;color:#c7c7c7;">N/A</div>
<div class="t" style="left:1490.00px;top:627px;font-size:17.5px;line-height:20px;color:#c7c7c7;letter-spacing:1.200px;">N/A</div>
<div class="t" style="left:1743.20px;top:627px;font-size:16.5px;line-height:18px;color:#262626;font-weight:bold;letter-spacing:-0.802px;">Get SERP</div>
<div class="t" style="left:373.40px;top:675px;font-size:17.5px;line-height:20px;color:#0e49a1;letter-spacing:0.538px;">how to grow your youtube channel 2017</div>
<div class="t" style="left:799.10px;top:676px;font-size:15px;line-height:17px;color:#ffffff;font-weight:bold;">4</div>
<div class="t" style="left:848.13px;top:675px;font-size:17.5px;line-height:20px;color:#ffffff;">13</div>
<div class="t" style="left:1033.27px;top:675px;font-size:17.5px;line-height:20px;color:#333333;">20</div>
<div class="t" style="left:1200.50px;top:675px;font-size:17.5px;line-height:20px;color:#c7c7c7;">N/A</div>
<div class="t" style="left:1370.40px;top:675px;font-size:17.5px;line-height:20px;color:#c7c7c7;">N/A</div>
<div class="t" style="left:1435.20px;top:675px;font-size:17.5px;line-height:20px;color:#c7c7c7;">N/A</div>
<div class="t" style="left:1490.70px;top:675px;font-size:17.5px;line-height:20px;color:#0e49a1;letter-spacing:0.571px;">how to get views on you-</div>
<div class="t" style="left:1491.70px;top:699px;font-size:17.5px;line-height:20px;color:#0e49a1;letter-spacing:0.758px;">tube</div>
<div class="t" style="left:1738.90px;top:675px;font-size:16.5px;line-height:18px;color:#262626;font-weight:bold;letter-spacing:-1.000px;">SERP</div>
<div class="t" style="left:1867.20px;top:675px;font-size:17.5px;line-height:20px;color:#333333;letter-spacing:0.701px;">22 Oct '18</div>
<div class="t" style="left:373.40px;top:747px;font-size:17.5px;line-height:20px;color:#0e49a1;letter-spacing:0.538px;">how to grow your youtube channel 2016</div>
<div class="t" style="left:853.00px;top:747px;font-size:17.5px;line-height:20px;color:#ffffff;">0</div>
<div class="t" style="left:1033.27px;top:747px;font-size:17.5px;line-height:20px;color:#333333;">10</div>
<div class="t" style="left:1200.50px;top:747px;font-size:17.5px;line-height:20px;color:#c7c7c7;">N/A</div>
<div class="t" style="left:1370.40px;top:747px;font-size:17.5px;line-height:20px;color:#c7c7c7;">N/A</div>
<div class="t" style="left:1435.20px;top:747px;font-size:17.5px;line-height:20px;color:#c7c7c7;">N/A</div>
<div class="t" style="left:1490.70px;top:747px;font-size:17.5px;line-height:20px;color:#0e49a1;letter-spacing:0.598px;">how to grow your you-</div>
<div class="t" style="left:1491.70px;top:771px;font-size:17.5px;line-height:20px;color:#0e49a1;letter-spacing:0.482px;">tube channel 2016</div>
<div class="t" style="left:1738.90px;top:747px;font-size:16.5px;line-height:18px;color:#262626;font-weight:bold;letter-spacing:-1.000px;">SERP</div>
<div class="t" style="left:1874.20px;top:747px;font-size:17.5px;line-height:20px;color:#333333;letter-spacing:0.644px;">1 Nov '18</div>
</div>
</body></html>
